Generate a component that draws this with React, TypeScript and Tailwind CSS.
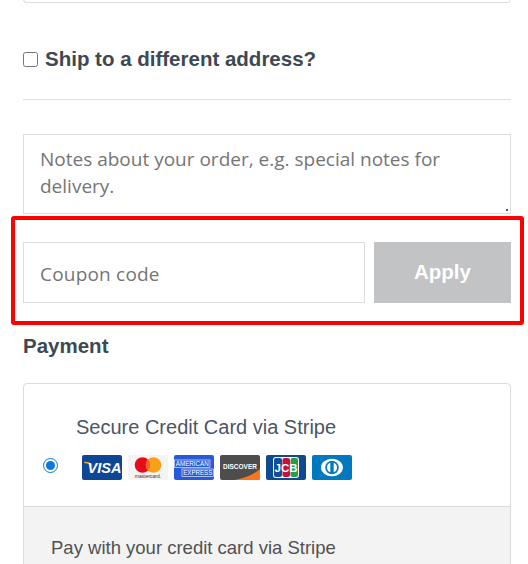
import React from "react";

const sans = "font-['Liberation_Sans',Arial,sans-serif]";
const noto = "font-['Open_Sans','Noto_Sans',sans-serif]";

function CardBox({ bg, children }: { bg: string; children: React.ReactNode }) {
  return (
    <svg width="40" height="25" viewBox="0 0 40 25" className="shrink-0">
      <rect width="40" height="25" rx="2" fill={bg} />
      {children}
    </svg>
  );
}

function Visa() {
  return (
    <CardBox bg="#0f4595">
      <path d="M2 7c3.500-.8 7 .4 9 4.500-2.500-2-4.500-3-9-3.500z" fill="#e8a33a" />
      <text x="22.500" y="18" textAnchor="middle" fontFamily="Liberation Sans" fontWeight="700" fontStyle="italic" fontSize="14.500" fill="#fff">VISA</text>
    </CardBox>
  );
}

function Mastercard() {
  return (
    <CardBox bg="#f4f4f4">
      <circle cx="14.500" cy="10" r="7.800" fill="#e80b1c" />
      <circle cx="25.500" cy="10" r="7.800" fill="#f9a01b" />
      <path d="M20 4.600a7.800 7.800 0 0 1 0 10.800 7.800 7.800 0 0 1 0-10.800z" fill="#f26522" />
      <text x="20" y="23" textAnchor="middle" fontFamily="Liberation Sans" fontSize="5" fill="#333">mastercard.</text>
    </CardBox>
  );
}

function Amex() {
  return (
    <CardBox bg="#2a5bd7">
      <g fill="none" stroke="#fff" strokeWidth=".6">
        <rect x=".5" y="5" width="35.500" height="7.500" fill="#2a5bd7" />
        <rect x="8" y="14" width="31.500" height="7.500" fill="#2a5bd7" />
      </g>
      <text x="18.250" y="11.300" textAnchor="middle" fontFamily="Liberation Sans" fontSize="7" textLength="33" lengthAdjust="spacingAndGlyphs" fill="#fff">AMERICAN</text>
      <text x="23.750" y="20.300" textAnchor="middle" fontFamily="Liberation Sans" fontSize="7" textLength="29" lengthAdjust="spacingAndGlyphs" fill="#fff">EXPRESS</text>
    </CardBox>
  );
}

function Discover() {
  return (
    <CardBox bg="#4d4d4d">
      <path d="M14 25c12-2 20-6 26-11v9a2 2 0 0 1-2 2z" fill="#f4761f" />
      <text x="20" y="13.500" textAnchor="middle" fontFamily="Liberation Sans" fontWeight="700" fontSize="6.500" textLength="34" lengthAdjust="spacingAndGlyphs" fill="#fff">DISCOVER</text>
    </CardBox>
  );
}

function Jcb() {
  return (
    <CardBox bg="#0f4a90">
      <rect x="7" y="2" width="26" height="21" rx="3" fill="#fff" />
      <rect x="8" y="3" width="8" height="19" rx="2" fill="#0f4f9e" />
      <rect x="16.500" y="3" width="7.500" height="19" rx="2" fill="#c3123e" />
      <rect x="24.500" y="3" width="7.500" height="19" rx="2" fill="#2f9b46" />
      <text x="20" y="17" textAnchor="middle" fontFamily="Liberation Sans" fontWeight="700" fontSize="10" textLength="23" lengthAdjust="spacingAndGlyphs" fill="#fff">JCB</text>
    </CardBox>
  );
}

function Diners() {
  return (
    <CardBox bg="#0079be">
      <ellipse cx="20" cy="12.500" rx="11" ry="8.800" fill="#fff" />
      <circle cx="20" cy="12.500" r="6.800" fill="#0079be" />
      <path d="M18.300 7.800v9.400a5 5 0 0 1 0-9.400zM21.700 7.800a5 5 0 0 1 0 9.400z" fill="#fff" />
    </CardBox>
  );
}

export default function App() {
  return (
    <div className={`h-[564px] overflow-hidden bg-white pl-[23px] pr-[17px] ${sans}`}>
      <div className="-mt-px h-[4px] rounded-b-sm border border-[#dcdcdc]" />

      <label className="mt-[42px] flex h-[28px] items-center">
        <input type="checkbox" className="m-0 h-[15px] w-[15px] shrink-0 appearance-auto" />
        <span className="ml-[7px] text-[20.500px] font-bold text-[#3d4852]">Ship to a different address?</span>
      </label>

      <div className="mt-[26px] h-px bg-[#dddddd]" />

      <div className="relative mt-[34px]">
        <textarea
          readOnly
          placeholder="Notes about your order, e.g. special notes for delivery."
          className={`block h-[80px] w-full resize-none border border-[#dcdcdc] px-[16px] py-[11px] text-[19px] leading-[27px] outline-none placeholder:text-[#757575] ${noto}`}
        />
        <span className="absolute bottom-[3px] right-[3px] h-[2px] w-[2px] bg-[#555555]" />
      </div>

      <div className="mb-[7px] -ml-3 -mr-[13px] mt-[2px] flex gap-[9px] rounded-[3px] border-[4px] border-[#ff0000] pb-[18px] pl-[8px] pr-[9px] pt-[22px]">
        <input
          readOnly
          placeholder="Coupon code"
          className={`h-[61px] min-w-0 flex-1 border border-[#dcdcdc] pl-[16px] pr-[16px] pt-[2px] text-[19px] tracking-[0.2px] outline-none placeholder:text-[#757575] ${noto}`}
        />
        <button className="h-[61px] w-[137px] bg-[#c2c3c5] text-[20.500px] font-bold text-white">Apply</button>
      </div>

      <h3 className="text-[20.500px] font-bold leading-[28px] text-[#3d4852]">Payment</h3>

      <div className="mt-[23px] rounded-t-[4px] border border-[#dcdcdc]">
        <div className="flex h-[122px] items-start pl-[19px]">
          <input type="radio" checked readOnly className="mt-[74px] h-[15px] w-[15px] shrink-0 appearance-auto accent-[#0a78dc]" />
          <div className="ml-[24px] pt-[30px]">
            <div className="-ml-[6px] text-[20px] leading-[26px] text-[#4b5563]">Secure Credit Card via Stripe</div>
            <div className="mt-[15px] flex gap-[6px]">
              <Visa />
              <Mastercard />
              <Amex />
              <Discover />
              <Jcb />
              <Diners />
            </div>
          </div>
        </div>
        <div className="h-[60px] border-t border-[#dcdcdc] bg-[#f3f3f3] pl-[27px] pt-[28px] text-[18.500px] leading-[26px] text-[#515151]">
          Pay with your credit card via Stripe
        </div>
      </div>
    </div>
  );
}
